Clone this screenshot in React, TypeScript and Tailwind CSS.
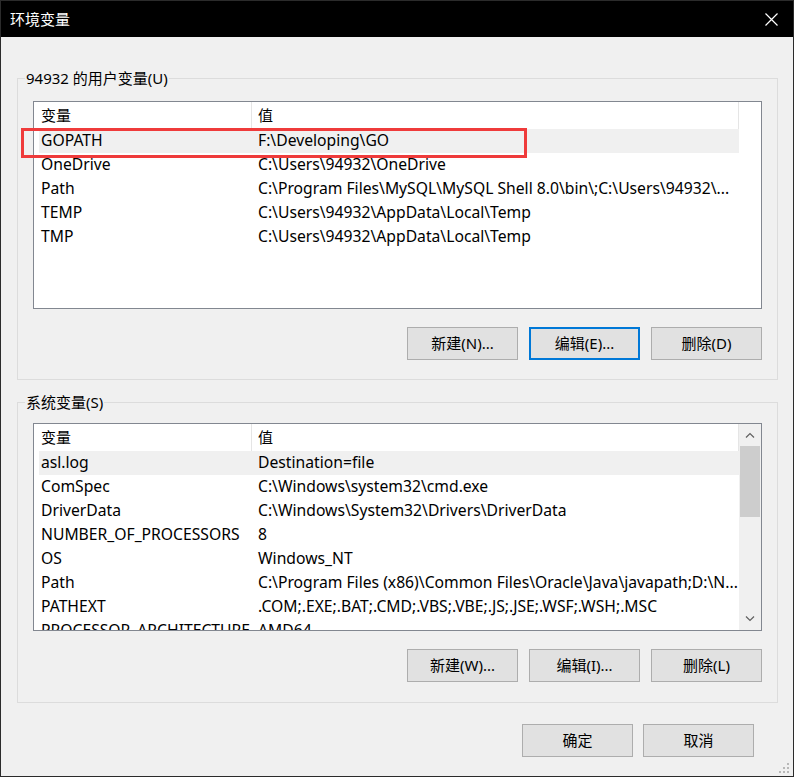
import React from 'react';

type Row = [string, string];

const USER_ROWS: Row[] = [
  ['GOPATH', 'F:\\Developing\\GO'],
  ['OneDrive', 'C:\\Users\\94932\\OneDrive'],
  ['Path', 'C:\\Program Files\\MySQL\\MySQL Shell 8.0\\bin\\;C:\\Users\\94932\\...'],
  ['TEMP', 'C:\\Users\\94932\\AppData\\Local\\Temp'],
  ['TMP', 'C:\\Users\\94932\\AppData\\Local\\Temp'],
];

const SYSTEM_ROWS: Row[] = [
  ['asl.log', 'Destination=file'],
  ['ComSpec', 'C:\\Windows\\system32\\cmd.exe'],
  ['DriverData', 'C:\\Windows\\System32\\Drivers\\DriverData'],
  ['NUMBER_OF_PROCESSORS', '8'],
  ['OS', 'Windows_NT'],
  ['Path', 'C:\\Program Files (x86)\\Common Files\\Oracle\\Java\\javapath;D:\\N...'],
  ['PATHEXT', '.COM;.EXE;.BAT;.CMD;.VBS;.VBE;.JS;.JSE;.WSF;.WSH;.MSC'],
  ['PROCESSOR_ARCHITECTURE', 'AMD64'],
];

function WinButton({ label, focused }: { label: string; focused?: boolean }) {
  return (
    <button
      className={
        focused
          ? 'w-[111px] h-[33px] bg-[#e1e1e1] border-2 border-[#0078d7] text-[15px] text-black flex items-center justify-center'
          : 'w-[111px] h-[33px] bg-[#e1e1e1] border border-[#adadad] text-[15px] text-black flex items-center justify-center'
      }
    >
      {label}
    </button>
  );
}

function ScrollBar() {
  return (
    <div className="w-[22px] h-full bg-[#f0f0f0] flex flex-col pl-[1px] pr-[1px]">
      <div className="h-[22px] flex items-center justify-center">
        <svg width="10" height="6" viewBox="0 0 10 6">
          <path d="M1 5.5 L5 1.5 L9 5.5" stroke="#606060" strokeWidth="1.2" fill="none" />
        </svg>
      </div>
      <div className="h-[71px] bg-[#cdcdcd]" />
      <div className="flex-1" />
      <div className="h-[22px] flex items-center justify-center">
        <svg width="10" height="6" viewBox="0 0 10 6">
          <path d="M1 0.5 L5 4.5 L9 0.5" stroke="#606060" strokeWidth="1.2" fill="none" />
        </svg>
      </div>
    </div>
  );
}

function ListView({ rows, scroll }: { rows: Row[]; scroll?: boolean }) {
  return (
    <div className="w-[729px] h-[208px] border border-[#828790] bg-white flex overflow-hidden">
      <div className="w-[705px] flex flex-col overflow-hidden">
        <div className="flex h-[27px] shrink-0">
          <div className="w-[218px] pl-[7px] border-r border-[#e5e5e5] flex items-center">变量</div>
          <div className="w-[487px] pl-[6px] border-r border-[#e5e5e5] flex items-center">值</div>
        </div>
        {rows.map(([name, value], i) => (
          <div
            key={name + i}
            className={
              i === 0
                ? 'ml-[5px] w-[700px] h-[24px] shrink-0 flex items-center bg-[#f0f0f0] whitespace-nowrap text-[15.7px]'
                : 'ml-[5px] w-[700px] h-[24px] shrink-0 flex items-center whitespace-nowrap text-[15.7px]'
            }
          >
            <div className="w-[217px] pl-[2px] overflow-hidden">{name}</div>
            <div className="flex-1 pl-[2px] overflow-hidden">{value}</div>
          </div>
        ))}
      </div>
      <div className="flex-1">{scroll && <ScrollBar />}</div>
    </div>
  );
}

function Group({
  title,
  rows,
  buttons,
  scroll,
  topGap,
  bottomPad,
}: {
  title: string;
  rows: Row[];
  buttons: string[];
  scroll?: boolean;
  topGap: string;
  bottomPad: string;
}) {
  return (
    <fieldset className={'w-[761px] ml-[16px] border border-[#dcdcdc] ' + bottomPad}>
      <legend className="ml-[7px] px-[1px] leading-[20px]">{title}</legend>
      <div className={'pl-[15px] ' + topGap}>
        <ListView rows={rows} scroll={scroll} />
        <div className="w-[729px] flex justify-end gap-[11px] mt-[18px]">
          <WinButton label={buttons[0]} />
          <WinButton label={buttons[1]} focused={!scroll} />
          <WinButton label={buttons[2]} />
        </div>
      </div>
    </fieldset>
  );
}

export default function App() {
  return (
    <div className="relative w-[794px] h-[777px] border border-[#2b2b2b] bg-[#f0f0f0] text-[15px] text-black font-['Noto_Sans','Noto_Sans_CJK_SC',sans-serif] flex flex-col overflow-hidden">
      {/* title bar */}
      <div className="h-[36px] bg-black flex items-center justify-between pl-[9px] pr-[15px] shrink-0">
        <span className="text-white">环境变量</span>
        <svg width="13" height="13" viewBox="0 0 13 13">
          <path d="M0.5 0.5 L12.5 12.5 M12.5 0.5 L0.5 12.5" stroke="#ffffff" strokeWidth="1.2" />
        </svg>
      </div>

      <div className="mt-[31px]">
        <Group
          title="94932 的用户变量(U)"
          rows={USER_ROWS}
          buttons={['新建(N)...', '编辑(E)...', '删除(D)']}
          topGap="mt-[13px]"
          bottomPad="pb-[19px]"
        />
      </div>
      <div className="mt-[12px]">
        <Group
          title="系统变量(S)"
          rows={SYSTEM_ROWS}
          buttons={['新建(W)...', '编辑(I)...', '删除(L)']}
          scroll
          topGap="mt-[11px]"
          bottomPad="pb-[20px]"
        />
      </div>

      <div className="flex justify-end gap-[10px] pr-[39px] mt-[21px]">
        <WinButton label="确定" />
        <WinButton label="取消" />
      </div>

      {/* annotation highlight */}
      <div className="absolute left-[20px] top-[127px] w-[506px] h-[30px] border-[3px] border-[#ef3b3b] pointer-events-none" />

      {/* size grip */}
      <svg className="absolute right-[3px] bottom-[2px]" width="12" height="12" viewBox="0 0 12 12">
        <rect x="9" y="1" width="2" height="2" fill="#b8b8b8" />
        <rect x="5" y="5" width="2" height="2" fill="#b8b8b8" />
        <rect x="9" y="5" width="2" height="2" fill="#b8b8b8" />
        <rect x="1" y="9" width="2" height="2" fill="#b8b8b8" />
        <rect x="5" y="9" width="2" height="2" fill="#b8b8b8" />
        <rect x="9" y="9" width="2" height="2" fill="#b8b8b8" />
      </svg>
    </div>
  );
}
